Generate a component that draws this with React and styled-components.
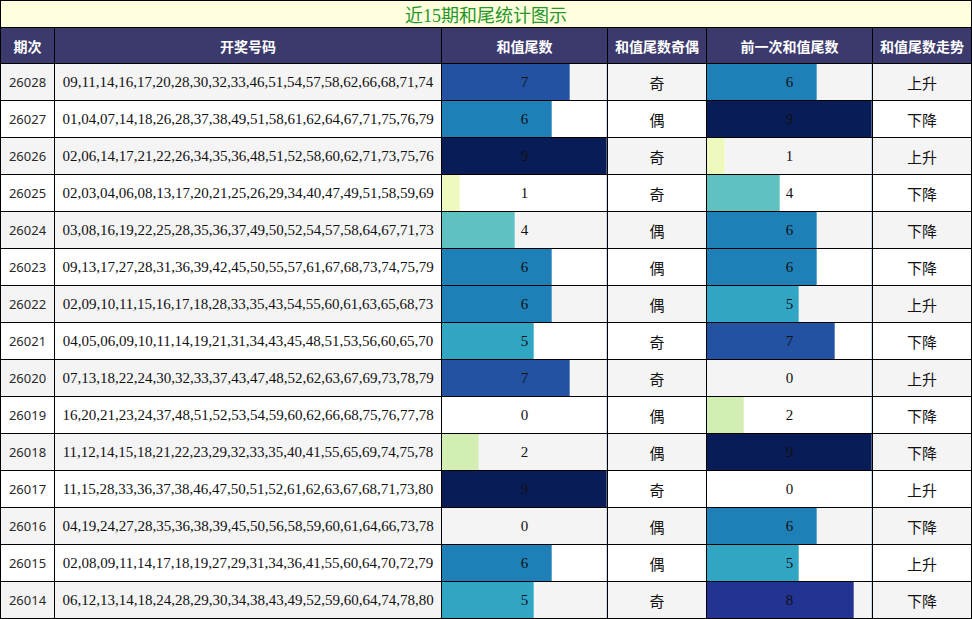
import React from "react";
import styled, { createGlobalStyle } from "styled-components";

const GlobalStyle = createGlobalStyle`
  html, body { margin: 0; padding: 0; background: #fff; }
  * { box-sizing: border-box; }
`;

const COLORS = {
  1: "#eef9bd",
  2: "#d3eeb3",
  3: "#97d6b9",
  4: "#5fc1c0",
  5: "#31a6c4",
  6: "#1f80b8",
  7: "#2352a2",
  8: "#233392",
  9: "#081d58",
};

const rows = [
  ["26028", "09,11,14,16,17,20,28,30,32,33,46,51,54,57,58,62,66,68,71,74", 7, "奇", 6, "上升"],
  ["26027", "01,04,07,14,18,26,28,37,38,49,51,58,61,62,64,67,71,75,76,79", 6, "偶", 9, "下降"],
  ["26026", "02,06,14,17,21,22,26,34,35,36,48,51,52,58,60,62,71,73,75,76", 9, "奇", 1, "上升"],
  ["26025", "02,03,04,06,08,13,17,20,21,25,26,29,34,40,47,49,51,58,59,69", 1, "奇", 4, "下降"],
  ["26024", "03,08,16,19,22,25,28,35,36,37,49,50,52,54,57,58,64,67,71,73", 4, "偶", 6, "下降"],
  ["26023", "09,13,17,27,28,31,36,39,42,45,50,55,57,61,67,68,73,74,75,79", 6, "偶", 6, "下降"],
  ["26022", "02,09,10,11,15,16,17,18,28,33,35,43,54,55,60,61,63,65,68,73", 6, "偶", 5, "上升"],
  ["26021", "04,05,06,09,10,11,14,19,21,31,34,43,45,48,51,53,56,60,65,70", 5, "奇", 7, "下降"],
  ["26020", "07,13,18,22,24,30,32,33,37,43,47,48,52,62,63,67,69,73,78,79", 7, "奇", 0, "上升"],
  ["26019", "16,20,21,23,24,37,48,51,52,53,54,59,60,62,66,68,75,76,77,78", 0, "偶", 2, "下降"],
  ["26018", "11,12,14,15,18,21,22,23,29,32,33,35,40,41,55,65,69,74,75,78", 2, "偶", 9, "下降"],
  ["26017", "11,15,28,33,36,37,38,46,47,50,51,52,61,62,63,67,68,71,73,80", 9, "奇", 0, "上升"],
  ["26016", "04,19,24,27,28,35,36,38,39,45,50,56,58,59,60,61,64,66,73,78", 0, "偶", 6, "下降"],
  ["26015", "02,08,09,11,14,17,18,19,27,29,31,34,36,41,55,60,64,70,72,79", 6, "偶", 5, "上升"],
  ["26014", "06,12,13,14,18,24,28,29,30,34,38,43,49,52,59,60,64,74,78,80", 5, "奇", 8, "下降"],
];

const Sheet = styled.div`
  width: 972px;
  display: grid;
  grid-template-columns: 54px 387px 166px 99px 166px 99px;
  border-left: 1px solid #000;
  border-top: 1px solid #000;
`;

const Title = styled.div`
  grid-column: 1 / -1;
  height: 27px;
  background: #ffffdd;
  border-right: 1px solid #000;
  border-bottom: 1px solid #000;
  display: flex;
  align-items: center;
  justify-content: center;
  color: #24962a;
  font-family: "Liberation Serif", "Noto Sans CJK SC", serif;
  font-size: 18px;
`;

const Head = styled.div`
  height: 36px;
  background: #3c3a6d;
  color: #fff;
  border-right: 1px solid #000;
  border-bottom: 1px solid #000;
  display: flex;
  align-items: center;
  justify-content: center;
  font-family: "Noto Sans CJK SC", sans-serif;
  font-weight: bold;
  font-size: 14px;
`;

const Cell = styled.div`
  position: relative;
  height: 37px;
  background: ${({ $alt }) => ($alt ? "#f4f4f4" : "#fff")};
  border-right: 1px solid #000;
  border-bottom: 1px solid #000;
  display: flex;
  align-items: center;
  justify-content: center;
  color: ${({ $font }) => ($font === "sans" ? "#2a2a2a" : "#111")};
  font-size: ${({ $size }) => $size || 15}px;
  font-family: ${({ $font }) =>
    $font === "sans"
      ? `"Noto Sans", sans-serif`
      : $font === "cjk"
      ? `"Noto Sans CJK SC", sans-serif`
      : `"Liberation Serif", serif`};
`;

const Edge = styled.div`
  position: absolute;
  right: 0;
  top: 0;
  bottom: 0;
  width: 1px;
  background: #c4dbef;
`;

const Bar = styled.div`
  position: absolute;
  left: 0;
  top: 0;
  bottom: 0;
  background: ${({ $v }) => COLORS[$v] || "transparent"};
  box-shadow: inset -1px 0 0 rgba(255, 255, 255, 0.3);
`;

const Value = styled.span`
  position: relative;
  color: #111;
`;

const BarCell = ({ v, alt }) => (
  <Cell $alt={alt}>
    <Edge />
    <Bar $v={v} style={{ width: `${(v / 9) * 165}px` }} />
    <Value>{v}</Value>
  </Cell>
);

export default function App() {
  return (
    <>
      <GlobalStyle />
      <Sheet>
        <Title>近15期和尾统计图示</Title>
        <Head>期次</Head>
        <Head>开奖号码</Head>
        <Head>和值尾数</Head>
        <Head>和值尾数奇偶</Head>
        <Head>前一次和值尾数</Head>
        <Head>和值尾数走势</Head>
        {rows.map(([issue, nums, tail, parity, prev, trend], i) => {
          const alt = i % 2 === 0;
          return (
            <React.Fragment key={issue}>
              <Cell $alt={alt} $font="sans" $size={13}>{issue}</Cell>
              <Cell $alt={alt}>{nums}</Cell>
              <BarCell v={tail} alt={alt} />
              <Cell $alt={alt} $font="cjk">{parity}</Cell>
              <BarCell v={prev} alt={alt} />
              <Cell $alt={alt} $font="cjk">{trend}</Cell>
            </React.Fragment>
          );
        })}
      </Sheet>
    </>
  );
}
